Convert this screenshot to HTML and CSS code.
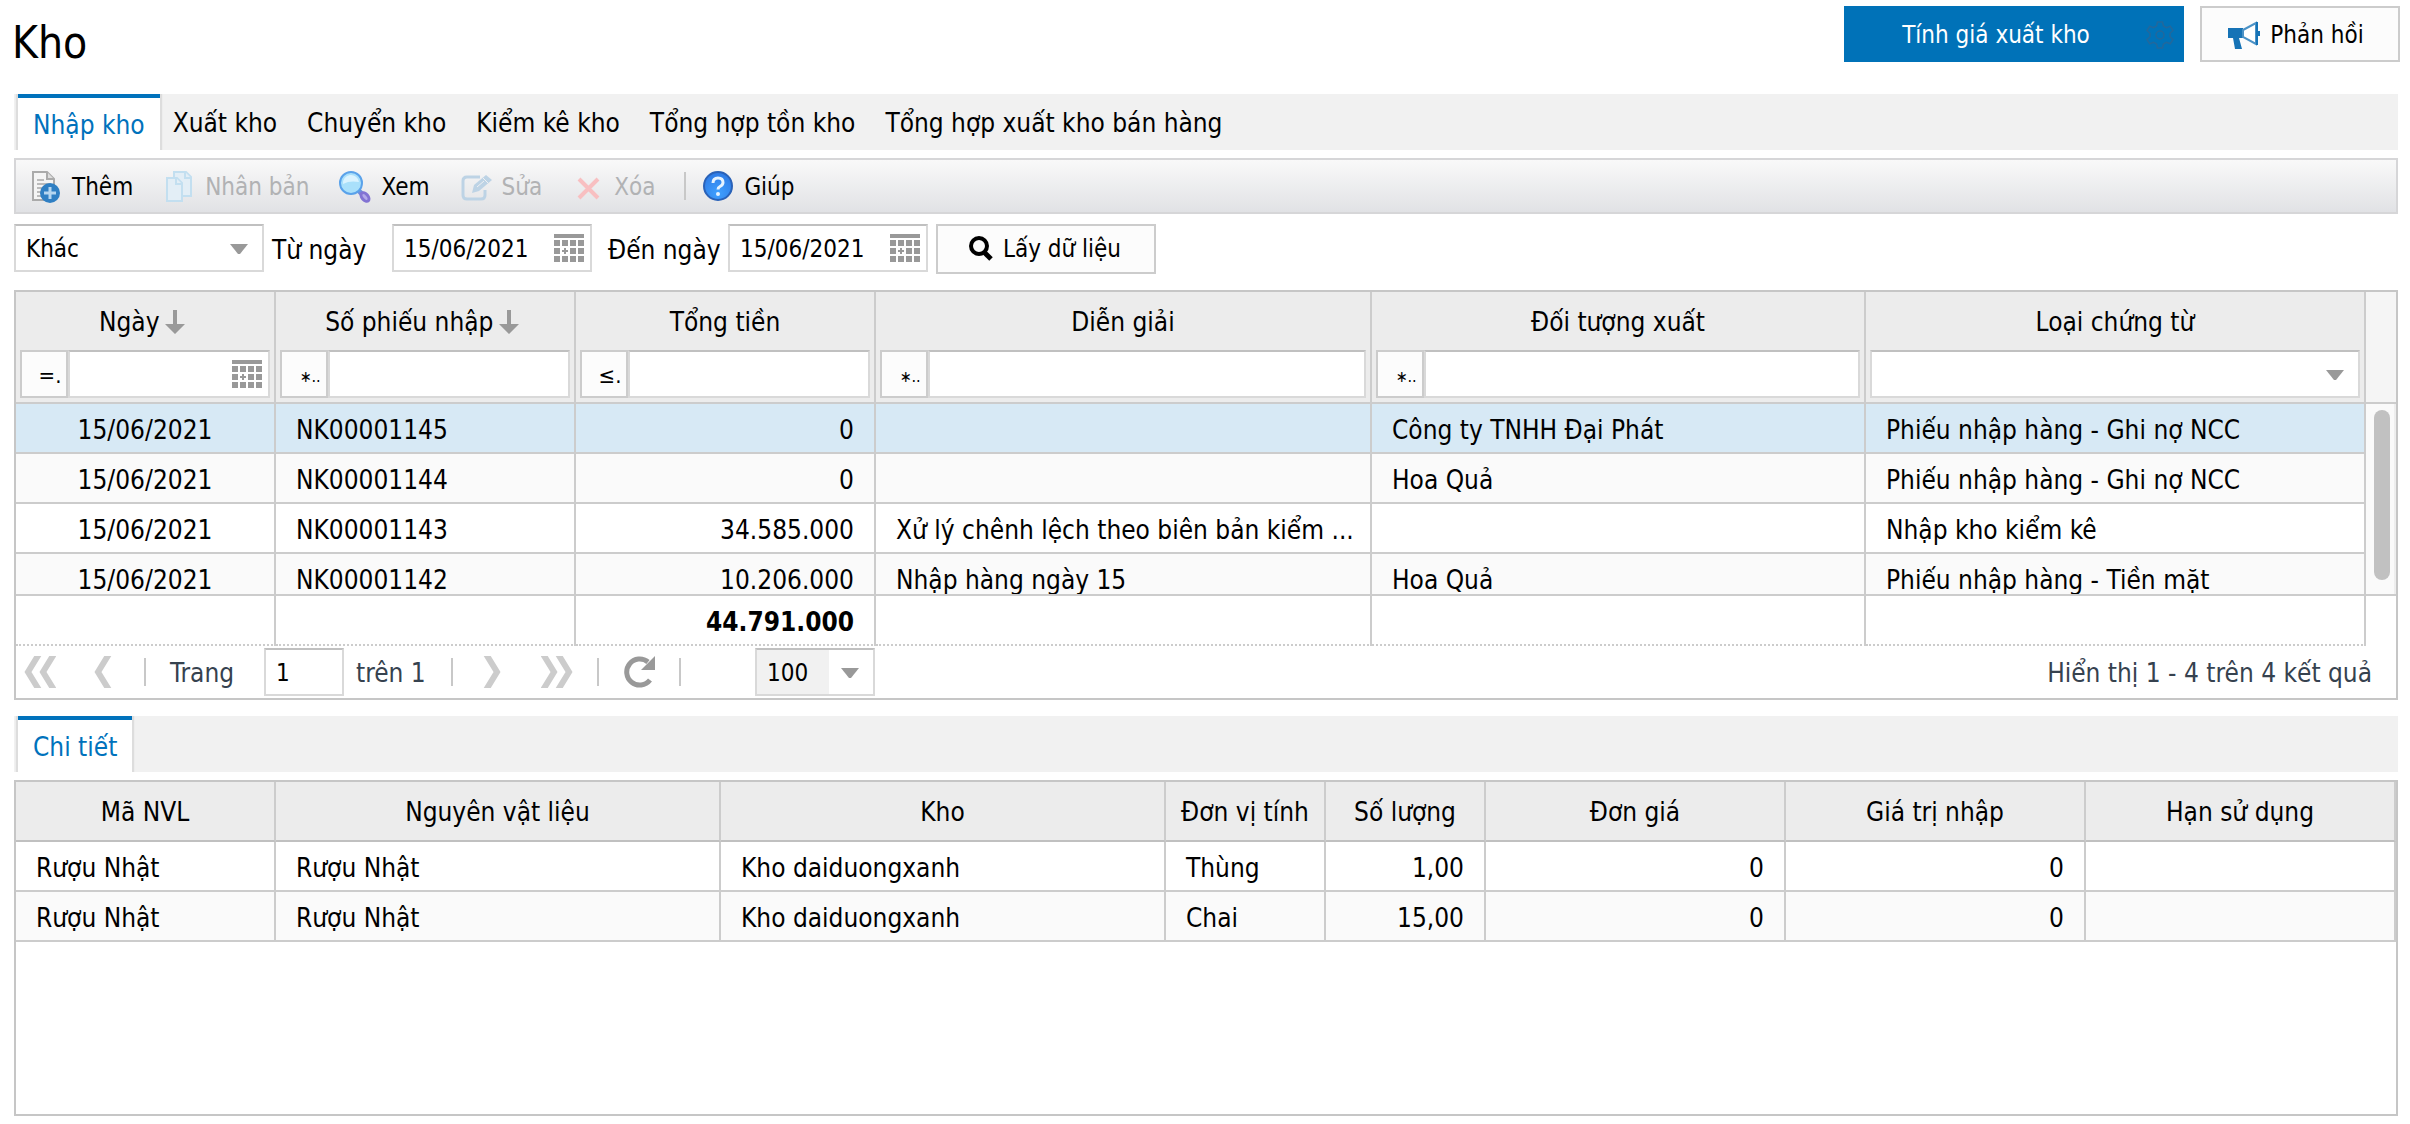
FILE: index.html
```html
<!DOCTYPE html>
<html lang="vi">

<head>
    <meta charset="UTF-8">
    <meta name="viewport" content="width=device-width, initial-scale=1.0">
    <title>Kho</title>
    <link rel="stylesheet" href="styles.css">
</head>

<body>
    <!-- shared icons -->
    <svg class="sprite" aria-hidden="true">
        <symbol id="i-calendar" viewBox="0 0 30 30">
            <g fill="#999">
                <path d="M0 1h30v4H0zM0 7h6v6H0zM8 7h6v6H8zM16 7h6v6h-6zM24 7h6v6h-6zM0 15h6v6H0zM16 15h6v6h-6zM24 15h6v6h-6zM0 23h6v6H0zM8 23h6v6H8zM16 23h6v6h-6zM24 23h6v6h-6z" />
                <path d="M10 15h2v2h2v2h-2v2h-2v-2H8v-2h2z" />
            </g>
        </symbol>
        <symbol id="i-caret" viewBox="0 0 18 10">
            <path d="M0 0h18l-8 10H8z" fill="#999" />
        </symbol>
        <symbol id="i-sort" viewBox="0 0 20 26">
            <path d="M8 1h4v14h8L10 25 0 15h8z" fill="#999" />
        </symbol>
    </svg>

    <header class="header">
        <h1>Kho</h1>
        <div class="header-buttons">
            <button class="btn btn-primary" type="button">
                <span>Tính giá xuất kho</span>
                <svg class="gear" viewBox="0 0 28 28" fill="none" stroke="#22689c" stroke-width="1.500">
                    <path d="M11.500 1h5l1 4 3 1.600 3.700-1.400L27 9.500 24 12.300v3.400l3 2.800-2.800 4.300-3.700-1.400-3 1.600-1 4h-5l-1-4-3-1.600-3.700 1.400L1 18.500l3-2.800v-3.400L1 9.500l2.800-4.300 3.700 1.400 3-1.600z" />
                    <circle cx="14" cy="14" r="4" />
                </svg>
            </button>
            <button class="btn btn-feedback" type="button">
                <svg width="32" height="28" viewBox="0 0 32 28">
                    <path d="M0 7h15v10h-4l3 11H7L5 17H0z" fill="#1673b6" />
                    <path d="M15 9L28 2v21L15 16z" fill="#fff" stroke="#4b92c6" stroke-width="2" />
                    <path d="M28 1h2v9h2v5h-2v9h-2z" fill="#1673b6" />
                </svg>
                <span>Phản hồi</span>
            </button>
        </div>
    </header>

    <nav class="tabs" role="tablist">
        <button class="tab on" type="button" role="tab">Nhập kho</button>
        <button class="tab" type="button" role="tab">Xuất kho</button>
        <button class="tab" type="button" role="tab">Chuyển kho</button>
        <button class="tab" type="button" role="tab">Kiểm kê kho</button>
        <button class="tab" type="button" role="tab">Tổng hợp tồn kho</button>
        <button class="tab" type="button" role="tab">Tổng hợp xuất kho bán hàng</button>
    </nav>

    <div class="toolbar">
        <button class="tool" type="button">
            <svg width="32" height="32" viewBox="0 0 32 32">
                <path d="M3 1h14l7 7v21H3z" fill="#f4f4f4" stroke="#aaa" stroke-width="2" />
                <path d="M17 1v7h7" fill="#ddd" stroke="#aaa" stroke-width="2" />
                <path d="M7 9h7M7 13h12M7 17h9M7 21h6M7 25h5" stroke="#bbb" stroke-width="2" />
                <circle cx="20" cy="22" r="10" fill="#2f7fc3" />
                <path d="M20 16v12M14 22h12" stroke="#b5d6f0" stroke-width="3" />
            </svg>
            <span>Thêm</span>
        </button>
        <button class="tool" type="button" disabled>
            <svg width="32" height="32" viewBox="0 0 32 32" fill="#e3eef6" stroke="#c3dff0" stroke-width="2">
                <path d="M11 1h12l5 5v19H11z" />
                <path d="M22 1v6h6" />
                <path d="M4 7h10l5 5v18H4z" />
                <path d="M13 7v6h6" />
            </svg>
            <span>Nhân bản</span>
        </button>
        <button class="tool" type="button">
            <svg width="32" height="32" viewBox="0 0 32 32">
                <path d="M19 19l5 5" stroke="#6f8fdc" stroke-width="5" />
                <ellipse cx="26" cy="26" rx="3" ry="5" transform="rotate(-40 26 26)" fill="#b3a8ea" stroke="#8273d3" stroke-width="3" />
                <circle cx="12" cy="12" r="11" fill="#a9e0fb" stroke="#5aa2ea" stroke-width="2" />
                <path d="M4 13a8 8 0 0 1 16-2c-5-1-11-1-16 2z" fill="#daf3ff" />
            </svg>
            <span>Xem</span>
        </button>
        <button class="tool" type="button" disabled>
            <svg width="32" height="32" viewBox="0 0 32 32" fill="none" stroke="#bdd3e5" stroke-width="3">
                <path d="M20 6H7Q3 6 3 10v14q0 4 4 4h14q4 0 4-4v-5" />
                <path d="M12 22l2-8L26 4l6 5-13 11z" fill="#bdd3e5" stroke="none" />
                <path d="M23 7l5 5M17 16l7-6" stroke="#eff1f3" stroke-width="1" />
            </svg>
            <span>Sửa</span>
        </button>
        <button class="tool" type="button" disabled>
            <svg width="32" height="32" viewBox="0 0 32 32" fill="none" stroke="#f8bfc1" stroke-width="4">
                <path d="M7 8l19 19M26 8L7 27" />
            </svg>
            <span>Xóa</span>
        </button>
        <span class="sep"></span>
        <button class="tool" type="button">
            <svg width="32" height="32" viewBox="0 0 32 32">
                <defs>
                    <radialGradient id="help-fill" cx="50%" cy="75%" r="70%">
                        <stop offset="0" stop-color="#3fa0ff" />
                        <stop offset="1" stop-color="#2f7ce6" />
                    </radialGradient>
                </defs>
                <circle cx="16" cy="15" r="14" fill="url(#help-fill)" stroke="#2a62b8" stroke-width="2" />
                <path d="M11 12q0-5 5-5t5 4.500q0 2.500-3 4-2 1-2 3" fill="none" stroke="#e6f3ff" stroke-width="3" />
                <circle cx="16" cy="23" r="2" fill="#e6f3ff" />
            </svg>
            <span>Giúp</span>
        </button>
    </div>

    <form class="filters">
        <div class="combo combo-type">
            <select aria-label="Loại kỳ">
                <option>Khác</option>
            </select>
            <svg class="caret"><use href="#i-caret" /></svg>
        </div>
        <label class="label-from" for="from">Từ ngày</label>
        <div class="field date">
            <input id="from" type="text" value="15/06/2021">
            <button type="button" aria-label="Chọn ngày"><svg><use href="#i-calendar" /></svg></button>
        </div>
        <label class="label-to" for="to">Đến ngày</label>
        <div class="field date">
            <input id="to" type="text" value="15/06/2021">
            <button type="button" aria-label="Chọn ngày"><svg><use href="#i-calendar" /></svg></button>
        </div>
        <button class="btn btn-load" type="button">
            <svg width="24" height="26" viewBox="0 0 24 26" fill="none" stroke="#000" stroke-width="4">
                <circle cx="10" cy="10" r="8" />
                <path d="M15 16l7 7" stroke-width="5" />
            </svg>
            <span>Lấy dữ liệu</span>
        </button>
    </form>

    <section class="grid">
        <div class="grid-row">
            <table class="grid-head">
                <colgroup>
                    <col class="c-date"><col class="c-num"><col class="c-num"><col class="c-desc"><col><col class="c-type">
                </colgroup>
                <thead>
                    <tr>
                        <th>Ngày <svg class="sort"><use href="#i-sort" /></svg></th>
                        <th>Số phiếu nhập <svg class="sort"><use href="#i-sort" /></svg></th>
                        <th>Tổng tiền</th>
                        <th>Diễn giải</th>
                        <th>Đối tượng xuất</th>
                        <th>Loại chứng từ</th>
                    </tr>
                    <tr class="search">
                        <td>
                            <div class="search-box">
                                <button class="op" type="button">=.</button>
                                <div class="field date">
                                    <input type="text" aria-label="Ngày">
                                    <button type="button" aria-label="Chọn ngày"><svg><use href="#i-calendar" /></svg></button>
                                </div>
                            </div>
                        </td>
                        <td>
                            <div class="search-box">
                                <button class="op op-like" type="button">∗..</button>
                                <div class="field"><input type="text" aria-label="Số phiếu nhập"></div>
                            </div>
                        </td>
                        <td>
                            <div class="search-box">
                                <button class="op" type="button">≤.</button>
                                <div class="field"><input type="text" aria-label="Tổng tiền"></div>
                            </div>
                        </td>
                        <td>
                            <div class="search-box">
                                <button class="op op-like" type="button">∗..</button>
                                <div class="field"><input type="text" aria-label="Diễn giải"></div>
                            </div>
                        </td>
                        <td>
                            <div class="search-box">
                                <button class="op op-like" type="button">∗..</button>
                                <div class="field"><input type="text" aria-label="Đối tượng xuất"></div>
                            </div>
                        </td>
                        <td>
                            <div class="combo">
                                <select aria-label="Loại chứng từ">
                                    <option></option>
                                </select>
                                <svg class="caret"><use href="#i-caret" /></svg>
                            </div>
                        </td>
                    </tr>
                </thead>
            </table>
            <div class="gutter gutter-head"></div>
        </div>

        <div class="grid-row grid-body">
            <table>
                <colgroup>
                    <col class="c-date"><col class="c-num"><col class="c-num"><col class="c-desc"><col><col class="c-type">
                </colgroup>
                <tbody>
                    <tr class="selected">
                        <td class="center">15/06/2021</td>
                        <td>NK00001145</td>
                        <td class="right">0</td>
                        <td></td>
                        <td>Công ty TNHH Đại Phát</td>
                        <td>Phiếu nhập hàng - Ghi nợ NCC</td>
                    </tr>
                    <tr>
                        <td class="center">15/06/2021</td>
                        <td>NK00001144</td>
                        <td class="right">0</td>
                        <td></td>
                        <td>Hoa Quả</td>
                        <td>Phiếu nhập hàng - Ghi nợ NCC</td>
                    </tr>
                    <tr>
                        <td class="center">15/06/2021</td>
                        <td>NK00001143</td>
                        <td class="right">34.585.000</td>
                        <td>Xử lý chênh lệch theo biên bản kiểm ...</td>
                        <td></td>
                        <td>Nhập kho kiểm kê</td>
                    </tr>
                    <tr>
                        <td class="center">15/06/2021</td>
                        <td>NK00001142</td>
                        <td class="right">10.206.000</td>
                        <td>Nhập hàng ngày 15</td>
                        <td>Hoa Quả</td>
                        <td>Phiếu nhập hàng - Tiền mặt</td>
                    </tr>
                </tbody>
            </table>
            <div class="gutter gutter-scroll"><div class="thumb"></div></div>
        </div>

        <div class="grid-row">
            <table class="grid-sum">
                <colgroup>
                    <col class="c-date"><col class="c-num"><col class="c-num"><col class="c-desc"><col><col class="c-type">
                </colgroup>
                <tbody>
                    <tr>
                        <td></td>
                        <td></td>
                        <td class="right">44.791.000</td>
                        <td></td>
                        <td></td>
                        <td></td>
                    </tr>
                </tbody>
            </table>
            <div class="gutter"></div>
        </div>

        <div class="pager">
            <button type="button" aria-label="Trang đầu">
                <svg width="32" height="32" viewBox="0 0 32 32" fill="none" stroke="#ccc" stroke-width="6">
                    <path d="M15 -2L4 16l11 18M30 -2L19 16l11 18" />
                </svg>
            </button>
            <button type="button" aria-label="Trang trước">
                <svg width="32" height="32" viewBox="0 0 32 32" fill="none" stroke="#ccc" stroke-width="6">
                    <path d="M21 -2L10 16l11 18" />
                </svg>
            </button>
            <span class="sep"></span>
            <label for="page">Trang</label>
            <div class="field page"><input id="page" type="text" value="1"></div>
            <span class="of">trên 1</span>
            <span class="sep"></span>
            <button type="button" aria-label="Trang sau">
                <svg width="32" height="32" viewBox="0 0 32 32" fill="none" stroke="#ccc" stroke-width="6">
                    <path d="M9 -2l11 18L9 34" />
                </svg>
            </button>
            <button type="button" aria-label="Trang cuối">
                <svg width="32" height="32" viewBox="0 0 32 32" fill="none" stroke="#ccc" stroke-width="6">
                    <path d="M2 -2l11 18L2 34M17 -2l11 18L17 34" />
                </svg>
            </button>
            <span class="sep"></span>
            <button type="button" aria-label="Tải lại">
                <svg width="32" height="32" viewBox="0 0 32 32">
                    <path d="M25 6A13 13 0 1 0 27 24" fill="none" stroke="#999" stroke-width="5" />
                    <path d="M32 0v14H18z" fill="#999" />
                </svg>
            </button>
            <span class="sep"></span>
            <div class="combo combo-size">
                <select aria-label="Số dòng">
                    <option>100</option>
                </select>
                <svg class="caret"><use href="#i-caret" /></svg>
            </div>
            <span class="total">Hiển thị 1 - 4 trên 4 kết quả</span>
        </div>
    </section>

    <nav class="tabs tabs-detail" role="tablist">
        <button class="tab on" type="button" role="tab">Chi tiết</button>
    </nav>

    <section class="grid detail">
        <table>
            <colgroup>
                <col class="c-date"><col><col><col class="c-unit"><col class="c-unit"><col class="c-num"><col class="c-num"><col class="c-expiry">
            </colgroup>
            <thead>
                <tr>
                    <th>Mã NVL</th>
                    <th>Nguyên vật liệu</th>
                    <th>Kho</th>
                    <th>Đơn vị tính</th>
                    <th>Số lượng</th>
                    <th>Đơn giá</th>
                    <th>Giá trị nhập</th>
                    <th>Hạn sử dụng</th>
                </tr>
            </thead>
            <tbody>
                <tr>
                    <td>Rượu Nhật</td>
                    <td>Rượu Nhật</td>
                    <td>Kho daiduongxanh</td>
                    <td>Thùng</td>
                    <td class="right">1,00</td>
                    <td class="right">0</td>
                    <td class="right">0</td>
                    <td></td>
                </tr>
                <tr>
                    <td>Rượu Nhật</td>
                    <td>Rượu Nhật</td>
                    <td>Kho daiduongxanh</td>
                    <td>Chai</td>
                    <td class="right">15,00</td>
                    <td class="right">0</td>
                    <td class="right">0</td>
                    <td></td>
                </tr>
            </tbody>
        </table>
    </section>
</body>

</html>
```
FILE: styles.css
```css
* {
    box-sizing: border-box;
}

body {
    display: flex;
    flex-direction: column;
    min-height: 100vh;
    margin: 0;
    padding: 0 12px 8px 14px;
    background: #fff;
    color: #000;
    font-family: Tahoma, "DejaVu Sans Condensed", "Noto Sans", sans-serif;
    font-size: 26px;
    line-height: 32px;
}

button,
input,
select {
    margin: 0;
    padding: 2px 0 0;
    border: 0;
    background: none;
    color: inherit;
    font-family: inherit;
    font-size: 24px;
}

button {
    cursor: pointer;
}

svg {
    display: block;
    flex: none;
}

.sprite {
    position: absolute;
    width: 0;
    height: 0;
}

/* header */
.header {
    display: flex;
    justify-content: space-between;
    align-items: flex-start;
    height: 94px;
}

h1 {
    margin: 0 0 0 -2px;
    padding-top: 16px;
    font-size: 44px;
    font-weight: normal;
    line-height: 54px;
}

.header-buttons {
    display: flex;
    gap: 16px;
    margin-right: -2px;
    padding-top: 6px;
}

.btn {
    display: flex;
    align-items: center;
    justify-content: center;
    gap: 10px;
    border: 2px solid #ccc;
    background: #fcfcfc;
}

.btn-primary {
    gap: 0;
    width: 340px;
    height: 56px;
    border-color: #0072b8;
    background: #0072b8;
    color: #fff;
}

.btn-primary span {
    flex: 1;
}

.gear {
    width: 28px;
    height: 28px;
    margin-right: 8px;
}

.btn-feedback {
    width: 200px;
    height: 56px;
    padding-right: 8px;
}

/* tabs */
.tabs {
    display: flex;
    height: 56px;
    padding-left: 4px;
    background: #f1f1f1;
}

.tab {
    padding: 2px 17px 0 13px;
    font-size: 26px;
}

.tabs .on {
    padding: 2px 15px 0;
    border-top: 4px solid #0072bc;
    background: #fff;
    box-shadow: -2px 0 1px #ddd, 2px 0 1px #ddd;
    clip-path: inset(0 -4px 0 -4px);
    color: #0072bc;
}

.tabs-detail {
    margin: 16px 0 8px;
}

/* toolbar */
.toolbar {
    display: flex;
    align-items: center;
    height: 56px;
    margin-top: 8px;
    border: 2px solid #d6d6d8;
    background: linear-gradient(#f9f9f9, #e1e2e5);
}

.tool {
    display: flex;
    align-items: center;
    gap: 10px;
    height: 52px;
    padding: 2px 16px 0 14px;
}

.tool:disabled {
    color: #b1b2b4;
    cursor: default;
}

.sep {
    width: 2px;
    height: 28px;
    background: #c8c8c8;
}

.toolbar .sep {
    margin: 0 2px 0 13px;
}

/* fields */
.field,
.combo {
    display: flex;
    height: 48px;
    border: 2px solid #d9d9d9;
    border-top-color: #c0c0c0;
    background: #fff;
}

.field input {
    flex: 1;
    min-width: 0;
    padding-left: 10px;
}

.date button {
    padding: 0 6px;
}

.date button svg {
    width: 30px;
    height: 30px;
}

.combo {
    position: relative;
}

.combo select {
    width: 100%;
    padding-left: 10px;
    appearance: none;
}

.caret {
    position: absolute;
    top: 18px;
    right: 14px;
    width: 18px;
    height: 10px;
    pointer-events: none;
}

.filters {
    display: flex;
    height: 50px;
    margin: 10px 0 16px;
}

.filters label {
    padding-top: 10px;
}

.filters .date {
    width: 200px;
}

.combo-type {
    width: 250px;
}

.label-from {
    width: 128px;
    padding-left: 8px;
}

.label-to {
    width: 136px;
    padding-left: 16px;
}

.btn-load {
    width: 220px;
    height: 50px;
    margin-left: 8px;
    padding: 0 2px 0 0;
}

/* grid */
.grid {
    border: 2px solid #c6c6c6;
}

.grid-row {
    display: flex;
}

table {
    flex: 1;
    width: 100%;
    border-spacing: 0;
    table-layout: fixed;
}

.c-date {
    width: 260px;
}

.c-num {
    width: 300px;
}

.c-desc {
    width: 496px;
}

.c-type {
    width: 500px;
}

.c-unit {
    width: 160px;
}

.c-expiry {
    width: 310px;
}

th {
    height: 58px;
    padding: 2px 0 0;
    border-right: 2px solid #ccc;
    background: #ececec;
    font-weight: normal;
    white-space: nowrap;
}

td {
    height: 50px;
    padding: 4px 20px 0;
    border-right: 2px solid #ccc;
    border-bottom: 2px solid #ccc;
    white-space: nowrap;
    overflow: hidden;
}

tbody tr:nth-child(even) {
    background: #fafafa;
}

tbody .selected {
    background: #d7e9f5;
}

.center {
    text-align: center;
}

.right {
    text-align: right;
}

.sort {
    display: inline-block;
    width: 20px;
    height: 26px;
    margin: -4px 6px 0 -2px;
    vertical-align: middle;
}

.search td {
    height: 54px;
    padding: 0 4px 4px;
    background: #ececec;
}

.search-box {
    display: flex;
}

.search .field {
    flex: 1;
    min-width: 0;
}

.op {
    width: 48px;
    height: 48px;
    padding-left: 12px;
    border: 2px solid #ccc;
    background: #fcfcfc;
    font-size: 22px;
}

.op-like {
    padding-top: 4px;
    font-size: 16px;
}

.gutter {
    flex: none;
    width: 30px;
}

.gutter-head {
    border-bottom: 2px solid #ccc;
    background: #f5f5f5;
}

/* the last visible row is cut by the body height */
.grid-body {
    align-items: flex-start;
    height: 192px;
    border-bottom: 2px solid #ccc;
    overflow: hidden;
}

.gutter-scroll {
    height: 190px;
    padding: 6px 4px 0 8px;
    border-right: 2px solid #eee;
    background: #fafafa;
}

.thumb {
    height: 170px;
    border-radius: 8px;
    background: #c1c1c1;
}

.grid-sum td {
    border-bottom-style: dotted;
    font-weight: bold;
}

/* pager */
.pager {
    display: flex;
    align-items: center;
    height: 52px;
    padding: 0 24px 0 8px;
    color: #36424f;
}

.pager button {
    margin-right: 32px;
    padding: 0;
}

.pager .sep {
    margin-right: 24px;
}

.pager button + .sep {
    margin-left: -8px;
}

.pager label {
    width: 94px;
}

.pager .page {
    width: 80px;
    color: #000;
}

.of {
    width: 107px;
    padding-left: 12px;
}

.combo-size {
    width: 120px;
    margin-left: 50px;
    background: linear-gradient(to right, #f1f1f1 72px, #fff 72px);
    color: #000;
}

.total {
    margin-left: auto;
}

.pager label,
.of,
.total {
    padding-top: 2px;
}

/* detail */
.detail {
    flex: 1;
}

.detail th {
    height: 60px;
    border-bottom: 2px solid #c0c0c0;
}
```
